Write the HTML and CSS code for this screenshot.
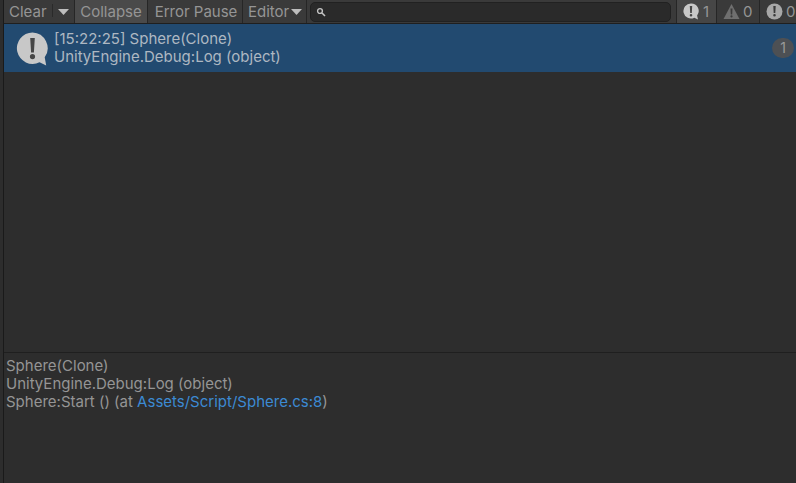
FILE: index.html
```html
<!DOCTYPE html>
<html lang="en">
<head>
<meta charset="utf-8">
<title>Console</title>
<link rel="stylesheet" href="styles.css">
</head>
<body>
<div class="console">
  <div class="toolbar">
    <span class="tb clear">Clear</span>
    <span class="tb drop"><svg class="tri" width="11" height="6" viewBox="0 0 11 6"><path d="M0 0H11L5.500 6Z"/></svg></span>
    <span class="tb collapse">Collapse</span>
    <span class="tb pause">Error Pause</span>
    <span class="tb editor">Editor<svg class="tri" width="11" height="6" viewBox="0 0 11 6"><path d="M0 0H11L5.500 6Z"/></svg></span>
    <div class="search-wrap">
      <div class="search">
        <svg width="10" height="10" viewBox="0 0 10 10"><circle cx="4" cy="4" r="2.400" fill="none" stroke="#c4c4c4" stroke-width="1.400"/><path d="M6 6L9 9" stroke="#c4c4c4" stroke-width="1.600"/></svg>
      </div>
    </div>
    <span class="tb count active">
      <svg width="17" height="17" viewBox="0 0 17 17"><path class="bubble" d="M8 0.500a7.500 7.500 0 1 0 3.300 14.200l3.700 1.800-0.900-3.900A7.500 7.500 0 0 0 8 0.500Z"/><path class="mark" d="M6.800 3h2.400l-0.400 7H7.200ZM8 11a1.300 1.300 0 1 1 0 2.600 1.300 1.300 0 0 1 0-2.600Z"/></svg>1</span>
    <span class="tb count warn-count">
      <svg width="17" height="17" viewBox="0 0 17 17"><path class="warn" d="M8.500 1L16.500 16H0.500Z"/><path class="mark-dim" d="M7.500 5.500h2l-0.300 6H7.800ZM8.500 12.300a1.100 1.100 0 1 1 0 2.200 1.100 1.100 0 0 1 0-2.200Z"/></svg>0</span>
    <span class="tb count last">
      <svg width="17" height="17" viewBox="0 0 17 17"><circle class="warn" cx="8.500" cy="8.500" r="8"/><path class="mark-dim" d="M7.300 3h2.400l-0.400 7H7.700ZM8.500 11a1.300 1.300 0 1 1 0 2.600 1.300 1.300 0 0 1 0-2.600Z"/></svg>0</span>
  </div>
  <div class="list">
    <div class="row">
      <svg class="row-icon" width="34" height="35" viewBox="0 0 34 35"><path class="bubble" d="M16.500 0.500a15.700 15.700 0 1 0 7 29.800l6.700 3.200-1.500-8.200A15.700 15.700 0 0 0 16.500 0.500Z"/><path class="mark" d="M14.200 6h4.600l-0.900 14.500h-2.800ZM16.500 22a2.600 2.600 0 1 1 0 5.200 2.600 2.600 0 0 1 0-5.200Z"/></svg>
      <div class="row-text">
        <div>[15:22:25] Sphere(Clone)</div>
        <div>UnityEngine.Debug:Log (object)</div>
      </div>
      <span class="badge">1</span>
    </div>
  </div>
  <div class="details">
    <div>Sphere(Clone)</div>
    <div>UnityEngine.Debug:Log (object)</div>
    <div>Sphere:Start () (at <span class="link">Assets/Script/Sphere.cs:8</span>)</div>
  </div>
</div>
</body>
</html>
```
FILE: styles.css
```css
* { box-sizing: border-box; }
html, body { margin: 0; height: 100%; overflow: hidden; background: #2d2d2d; }
.console {
  width: 793px; height: 483px; margin-left: 3px; border-left: 1px solid #1a1a1a;
  display: flex; flex-direction: column; background: #2d2d2d;
  font: 15px/18px Inter, "Noto Sans", sans-serif; color: #959595; overflow: hidden;
}
.toolbar { height: 24px; flex: none; display: flex; align-items: stretch; background: #3a3a3a; border-bottom: 1px solid #1f1f1f; }
.tb { display: flex; align-items: center; border-right: 1px solid #262626; white-space: nowrap; }
.clear { width: 49px; padding-left: 5px; position: relative; border-right: none; }
.clear::after { content: ""; position: absolute; right: 0; top: 4px; bottom: 6px; width: 1px; background: #2a2a2a; }
.drop { width: 22px; justify-content: center; }
.tri { fill: #bdbdbd; flex: none; }
.collapse { width: 73px; justify-content: center; background: #4a4a4a; }
.pause { width: 95px; justify-content: center; padding-left: 2px; }
.editor { width: 64px; padding-left: 5px; gap: 2px; }
.search-wrap { flex: 1; min-width: 0; display: flex; align-items: center; padding: 0 5px 0 3px; }
.search { height: 20px; flex: 1; background: #2a2a2a; border: 1px solid #212121; border-radius: 5px; display: flex; align-items: center; padding-left: 5px; }
.count { gap: 3px; padding-left: 6px; flex: none; border-left: 1px solid #262626; border-right: none; color: #959595; overflow: hidden; }
.count.active { background: #464646; width: 40px; }
.count.warn-count { width: 43px; }
.count.last { width: 37px; }
.count svg { flex: none; }
.bubble { fill: #c8c8c8; }
.mark { fill: #464646; }
.warn { fill: #6f6f6f; }
.count.last .warn { fill: #a8a8a8; }
.mark-dim { fill: #3a3a3a; }
.list { flex: 1; min-height: 0; }
.row { height: 48px; background: #224a70; display: flex; align-items: center; padding-left: 12px; position: relative; color: #aeb8c2; }
.row-icon { flex: none; margin-top: 3px; }
.row-text { margin-left: 4px; }
.badge { position: absolute; left: 768px; top: 14px; width: 22px; height: 20px; border-radius: 10px; background: #4d5054; color: #9a9a9a; display: flex; align-items: center; justify-content: center; font-size: 14px; }
.details { flex: none; height: 131px; border-top: 1px solid #1f1f1f; padding: 4px 0 0 2px; }
.link { color: #3c8ad3; }
```
